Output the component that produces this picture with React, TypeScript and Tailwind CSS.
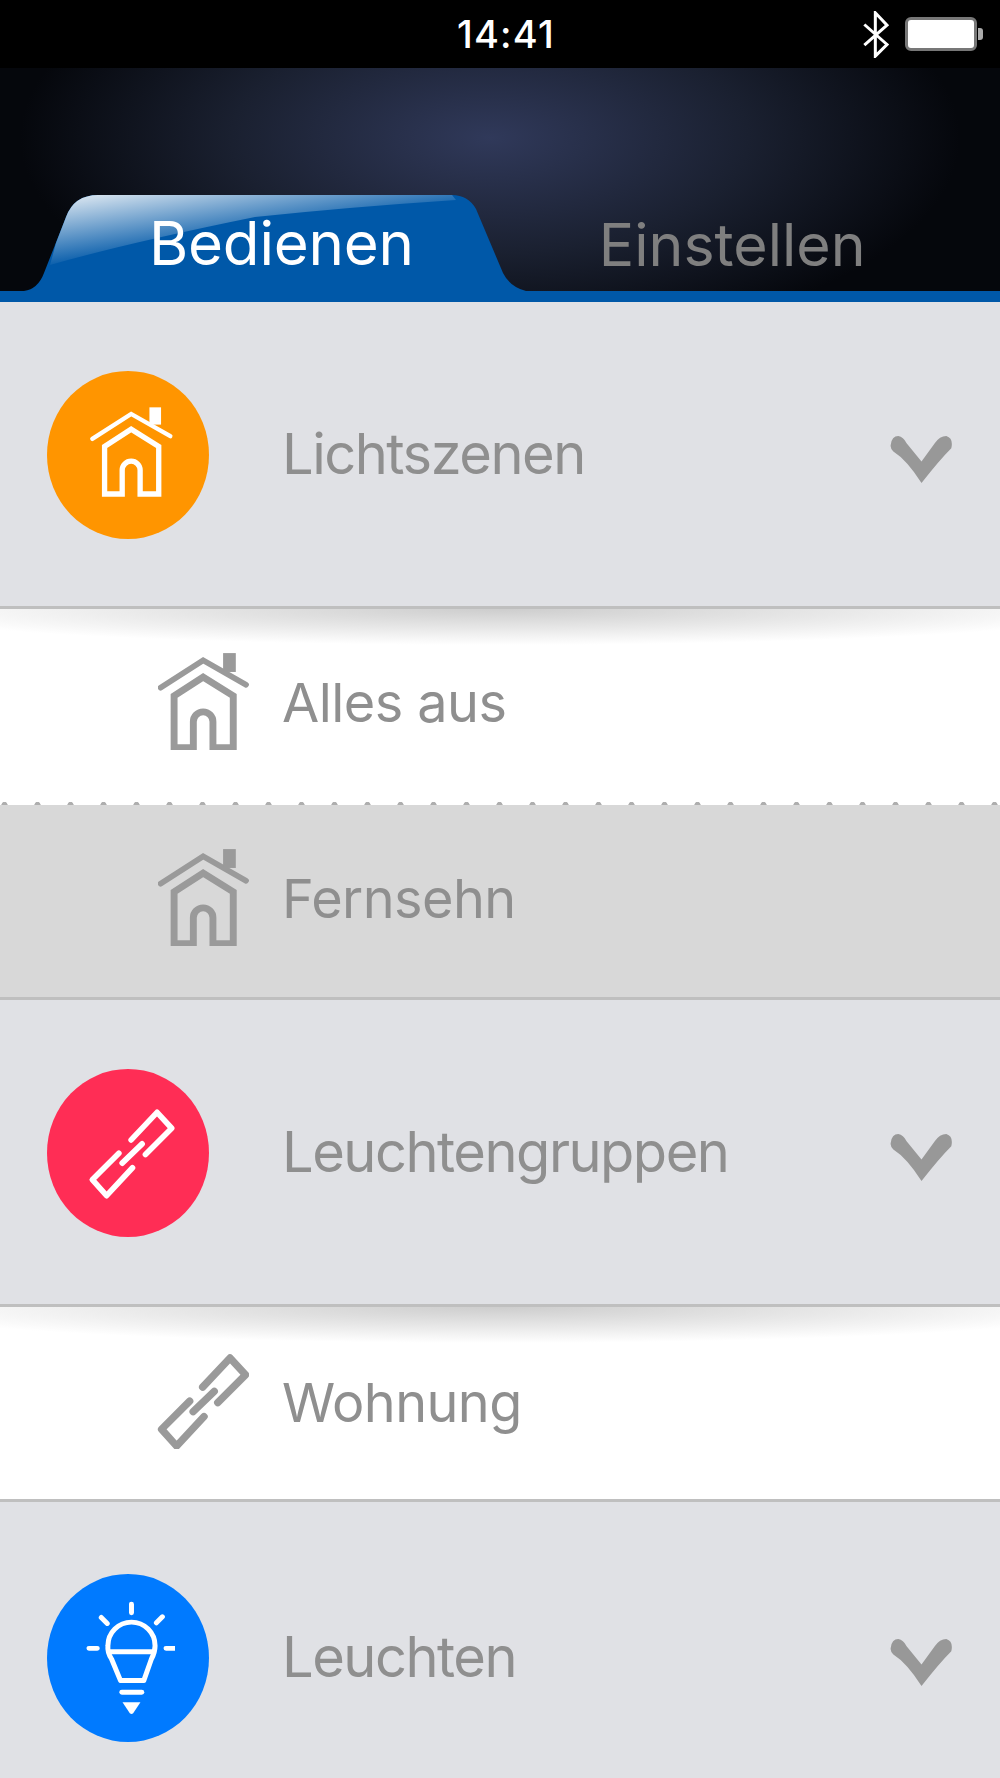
const gray = '#989898';

function HousePaths({ stroke }: { stroke: number }) {
  return (
    <>
      <path d="M275 295 L392 220 L510 287" fill="none" stroke="currentColor" strokeWidth={stroke - 3} strokeLinecap="round" />
      <rect x="447" y="200" width="35" height="52" fill="currentColor" />
      <path
        d="M312 461 H365 V389 A27 27 0 0 1 419 389 V461 H475 V318 L392 266 L312 318 Z"
        fill="none"
        stroke="currentColor"
        strokeWidth={stroke}
      />
    </>
  );
}

function ChainPaths({ stroke }: { stroke: number }) {
  return (
    <g fill="none" stroke="currentColor" strokeWidth={stroke} strokeLinecap="round" strokeLinejoin="round">
      <path d="M392 270 L470 187 L514 235 L435 314" />
      <path d="M355 310 L275 390 L318 438 L396 354" />
      <path d="M365 340 L425 282" />
    </g>
  );
}

function BulbIcon() {
  return (
    <svg viewBox="244 172 280 360" className="w-[93px] h-[120px] text-white">
      <g fill="none" stroke="currentColor" strokeWidth="15" strokeLinecap="round" strokeLinejoin="round">
        <path d="M393 190 V216 M302 230 L320 248 M486 228 L468 246 M265 323 H290 M497 323 H522" />
        <path d="M333 355 Q320 335 322 315 A71 71 0 0 1 464 315 Q464 335 453 355 L430 420 H360 Z" />
        <path d="M328 333 H460" />
        <path d="M364 455 H424" />
      </g>
      <path d="M366 485 H420 L398 518 Q393 523 388 518 Z" fill="currentColor" />
    </svg>
  );
}

function Chevron() {
  return (
    <svg viewBox="90 75 190 148" className="w-[63px] h-[49px] mt-[8px]" fill={gray}>
      <path d="M92 105 Q95 78 115 78 Q130 80 140 100 L185 155 L225 100 Q240 78 260 78 Q282 85 275 115 Q240 150 185 220 Q140 150 100 125 Q90 115 92 105 Z" />
    </svg>
  );
}

function SectionRow({ label, color, icon, height }: { label: string; color: string; icon: React.ReactNode; height: string }) {
  return (
    <div className={`${height} shrink-0 bg-[#e0e1e5] flex items-center pl-[47px] pr-[47px] pt-[2px]`}>
      <div className={`${color} w-[162px] h-[168px] rounded-[50%] shrink-0 flex items-center justify-center`}>{icon}</div>
      <span className="ml-[73px] text-[56px] leading-none tracking-[-1.5px] text-[#8f8f8f] pb-[2px]">{label}</span>
      <div className="ml-auto">
        <Chevron />
      </div>
    </div>
  );
}

function SubRow({ label, icon, className }: { label: string; icon: React.ReactNode; className: string }) {
  return (
    <div className={`${className} shrink-0 flex items-center text-[#9a9a9a]`}>
      <div className="w-[282px] shrink-0 flex justify-end pr-[33px]">{icon}</div>
      <span className="text-[54px] leading-none tracking-[-0.55px] text-[#8f8f8f] pt-[4px]">{label}</span>
    </div>
  );
}

function Band() {
  return (
    <div className="absolute top-0 inset-x-0 h-[36px] bg-[radial-gradient(ellipse_62%_100%_at_50%_0%,#cdcdcd,#e8e8e8_55%,#ffffff)]" />
  );
}

function Divider() {
  return <div className="shrink-0 h-[3px] bg-[#bfbfbf]" />;
}

export default function App() {
  return (
    <div className="w-[1000px] h-[1778px] overflow-hidden flex flex-col bg-white font-['Inter',sans-serif]">
      {/* Statusleiste */}
      <div className="h-[68px] shrink-0 bg-black flex items-center text-white">
        <span className="ml-[457px] text-[38px] tracking-[1.2px] font-medium leading-none">14:41</span>
        <div className="ml-auto mr-[17px] flex items-center">
          <svg viewBox="60 30 90 140" className="w-[30px] h-[47px] mr-[14px]">
            <path d="M70 70 L138 130 L103 165 V35 L138 72 L70 132" fill="none" stroke="#fff" strokeWidth="9" />
          </svg>
          <div className="w-[72px] h-[34px] rounded-[6px] border-[3px] border-[#777] bg-white" />
          <div className="w-[5px] h-[12px] rounded-r-[3px] bg-[#aaa] ml-[1px]" />
        </div>
      </div>

      {/* Kopf mit Tabs */}
      <div className="h-[223px] shrink-0 relative bg-[radial-gradient(ellipse_470px_210px_at_490px_70px,#30395a,#1a2030_55%,#05070c)]">
        <svg viewBox="0 0 560 110" className="absolute left-0 bottom-0 w-[560px] h-[110px]">
          <defs>
            <linearGradient id="gloss" x1="0.05" y1="0" x2="0.55" y2="0.6">
              <stop offset="0" stopColor="#dfe9f2" />
              <stop offset="1" stopColor="#0058a8" />
            </linearGradient>
          </defs>
          <path d="M0 110 H24 Q38 108 44 92 L66 36 Q74 14 98 14 H452 Q468 14 476 28 L503 92 Q510 106 526 110 Z" fill="#0058a8" />
          <path d="M56 62 L66 36 Q74 14 98 14 H452 L456 19 Q350 26 255 36 Q127 62 50 84 Z" fill="url(#gloss)" />
        </svg>
        <div className="absolute inset-x-0 bottom-[18px] flex items-end">
          <span className="ml-[149px] text-[60px] leading-none tracking-[-0.2px] text-white">Bedienen</span>
          <span className="ml-[185px] text-[59px] leading-none text-[#7f7f7f] translate-y-[1px]">Einstellen</span>
        </div>
      </div>
      <div className="h-[11px] shrink-0 bg-[#0058a8]" />

      <SectionRow
        label="Lichtszenen"
        color="bg-[#ff9500]"
        height="h-[304px]"
        icon={
          <svg viewBox="244 190 280 310" className="w-[93px] h-[103px] text-white">
            <HousePaths stroke={16} />
          </svg>
        }
      />
      <Divider />
      <div className="h-[191px] shrink-0 relative">
        <Band />
        <SubRow
          label="Alles aus"
          className="relative h-full pb-2"
          icon={
            <svg viewBox="268 197 250 270" className="w-[91px] h-[98px]">
              <HousePaths stroke={19} />
            </svg>
          }
        />
      </div>
      <div className="h-[5px] shrink-0 bg-[radial-gradient(circle,#aeaeae_2.8px,#ffffff_3.4px)] bg-[length:33px_10px] bg-[position:-12px_0]" />
      <SubRow
        label="Fernsehn"
        className="h-[192px] bg-[#d8d8d8] pb-2"
        icon={
          <svg viewBox="268 197 250 270" className="w-[91px] h-[98px]">
            <HousePaths stroke={19} />
          </svg>
        }
      />
      <Divider />
      <SectionRow
        label="Leuchtengruppen"
        color="bg-[#ff2d55]"
        height="h-[304px]"
        icon={
          <svg viewBox="244 171 280 280" className="w-[93px] h-[93px] text-white">
            <ChainPaths stroke={17} />
          </svg>
        }
      />
      <Divider />
      <div className="h-[192px] shrink-0 relative">
        <Band />
        <SubRow
          label="Wohnung"
          className="relative h-full pb-1"
          icon={
            <svg viewBox="262 176 262 270" className="w-[92px] h-[95px]">
              <ChainPaths stroke={21} />
            </svg>
          }
        />
      </div>
      <Divider />
      <SectionRow
        label="Leuchten"
        color="bg-[#007aff]"
        height="h-[310px]"
        icon={<BulbIcon />}
      />
    </div>
  );
}
